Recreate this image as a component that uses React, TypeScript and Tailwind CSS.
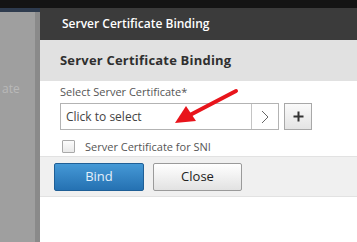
import React from 'react';

const App: React.FC = () => {
  return (
    <div
      className="relative w-[357px] h-[242px] overflow-hidden flex flex-col bg-white"
      style={{ fontFamily: '"Open Sans", "Noto Sans", sans-serif' }}
    >
      {/* Top app bar */}
      <div className="h-[8px] bg-[#141414] shrink-0" />

      <div className="flex flex-1 min-h-0">
        {/* Background page behind the dialog */}
        <div className="w-[40px] shrink-0 flex flex-col bg-[#9f9f9f]">
          <div className="h-[4px] bg-[#2e3b4e]" />
          <div className="flex flex-1">
            <div className="flex-1 pt-[71px] pl-[2px] text-[12px] text-[#b9b9b9] leading-none">ate</div>
            <div className="w-[5px] bg-[#8a8a8a]" />
          </div>
        </div>

        {/* Dialog */}
        <div className="flex-1 flex flex-col bg-white">
          <div className="h-[32px] bg-[#3b3b3b] flex items-center pl-[22px]">
            <span className="text-white text-[12px] font-semibold">Server Certificate Binding</span>
          </div>
          <div className="h-[41px] bg-[#e1e1e1] flex items-center pl-[20px]">
            <span className="text-[#2f2f2f] text-[13px] font-bold tracking-[0.2px]">Server Certificate Binding</span>
          </div>

          <div className="pl-[20px] pt-[4px]">
            <div className="text-[11px] text-[#555] leading-[14px] h-[18px]">Select Server Certificate*</div>
            <div className="flex items-center gap-[5px]">
              <div className="w-[219px] h-[27px] border border-[#b3b3b3] flex">
                <div className="flex-1 flex items-center pl-[5px] text-[12px] text-[#444]">Click to select</div>
                <div className="w-[27px] border-l border-[#c4c4c4] flex items-center justify-center">
                  <svg width="8" height="14" viewBox="0 0 8 14">
                    <path d="M1 1 L7 7 L1 13" fill="none" stroke="#666" strokeWidth="1" />
                  </svg>
                </div>
              </div>
              <div className="w-[28px] h-[27px] border border-[#a8a8a8] bg-gradient-to-b from-[#fafafa] to-[#e4e4e4] flex items-center justify-center">
                <svg width="11" height="11" viewBox="0 0 11 11">
                  <path d="M5.5 0.5 V10.5 M0.5 5.5 H10.5" stroke="#333" strokeWidth="2" />
                </svg>
              </div>
            </div>
            <div className="flex items-center h-[14px] gap-[10px] mt-[9px] ml-[2px]">
              <div className="w-[13px] h-[13px] border border-[#a9a9a9] bg-gradient-to-b from-[#fcfcfc] to-[#e9e9e9] rounded-[1px]" />
              <span className="text-[11px] text-[#555] leading-none">Server Certificate for SNI</span>
            </div>
          </div>

          <div className="mt-[3px] h-[41px] bg-[#f0f0f0] border-t border-[#e2e2e2] border-b flex items-center pl-[14px] gap-[9px]">
            <div className="w-[90px] h-[28px] rounded-[2px] border border-[#1f5f96] bg-gradient-to-b from-[#4599d6] to-[#2571b2] flex items-center justify-center text-[13px] text-[#e4f0fb]">
              Bind
            </div>
            <div className="w-[89px] h-[28px] rounded-[2px] border border-[#9a9a9a] bg-gradient-to-b from-[#ffffff] to-[#e2e2e2] flex items-center justify-center text-[13px] text-[#222]">
              Close
            </div>
          </div>
        </div>
      </div>

      {/* Red annotation arrow */}
      <svg className="absolute left-0 top-0" width="357" height="242" viewBox="0 0 357 242">
        <line x1="236" y1="91" x2="190" y2="115" stroke="#e8141b" strokeWidth="4" strokeLinecap="round" />
        <polygon points="175,123 186,106 196,121" fill="#e8141b" />
      </svg>
    </div>
  );
};

export default App;
